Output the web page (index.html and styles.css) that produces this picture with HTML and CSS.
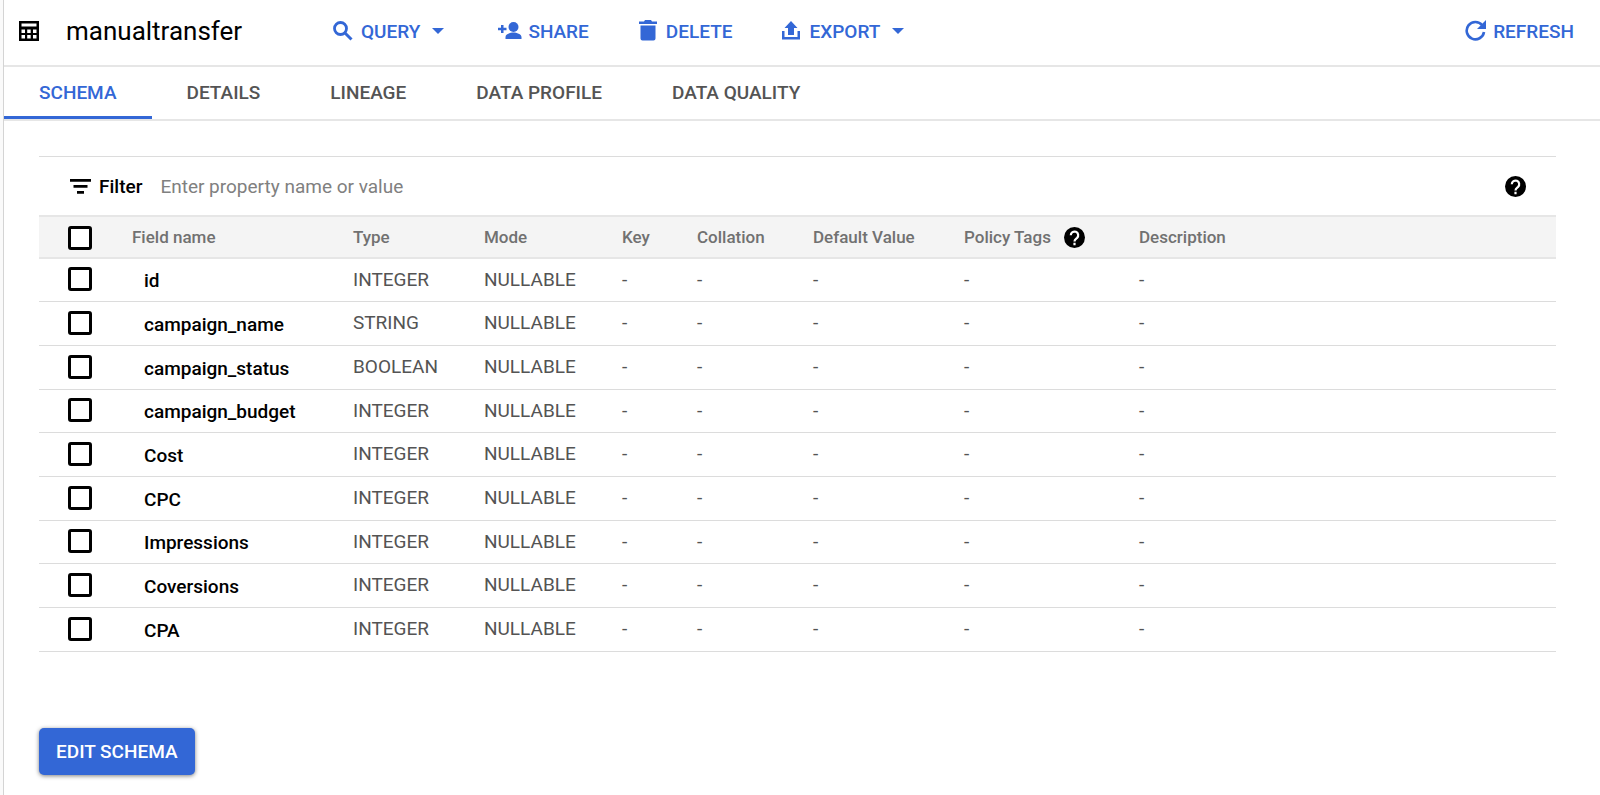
FILE: index.html
```html
<!DOCTYPE html>
<html lang="en">
<head>
  <meta charset="UTF-8">
  <meta name="viewport" content="width=device-width, initial-scale=1.0">
  <title>manualtransfer</title>
  <link rel="stylesheet" href="styles.css">
</head>
<body>

  <main class="panel">
    <!-- Title and actions -->
    <header class="toolbar">
      <svg class="table-icon" width="20" height="20" viewBox="0 0 20 20"><path fill-rule="evenodd" d="M0 0h20v20H0zM2.500 2.500v3h15v-3zM2.500 8.500v3.500h3.500v-3.500zM8.200 8.500v3.500h3.500v-3.500zM14 8.500v3.500h3.500v-3.500zM2.500 14v3.500h3.500v-3.500zM8.200 14v3.500h3.500v-3.500zM14 14v3.500h3.500v-3.500z"/></svg>
      <h1 class="title">manualtransfer</h1>

      <div class="actions">
        <button class="action" type="button">
          <span class="slot"><svg width="20" height="20" viewBox="0 0 20 20"><circle cx="7.500" cy="7.500" r="6" fill="none" stroke="currentColor" stroke-width="2.800"/><path d="M11.500 11.500l7 7" stroke="currentColor" stroke-width="3"/></svg></span>
          QUERY
          <span class="slot"><svg width="12" height="6" viewBox="0 0 12 6"><path d="M0 0h12L6 6z"/></svg></span>
        </button>
        <button class="action" type="button">
          <span class="slot"><svg width="24" height="18" viewBox="0 0 24 18"><circle cx="15.500" cy="5" r="5"/><path d="M7.500 17v-2c0-3 5-4.500 8-4.500s8 1.500 8 4.500v2zM3 3h2.500v2.800H8.500v2.400H5.500V11H3V8.200H0V5.800h3z"/></svg></span>
          SHARE
        </button>
        <button class="action" type="button">
          <span class="slot"><svg width="18" height="21" viewBox="0 0 18 21"><path d="M0 1.500h5L6 0h6l1 1.500h5V4H0zM1.500 5.500h15v13a2 2 0 0 1-2 2h-11a2 2 0 0 1-2-2z"/></svg></span>
          DELETE
        </button>
        <button class="action" type="button">
          <span class="slot"><svg width="18" height="19" viewBox="0 0 18 19"><path d="M9 0l6.500 7H12v7H6V7H2.500zM0 10h2.500v6h13v-6H18v8.500H0z"/></svg></span>
          EXPORT
          <span class="slot"><svg width="12" height="6" viewBox="0 0 12 6"><path d="M0 0h12L6 6z"/></svg></span>
        </button>
      </div>

      <button class="action refresh" type="button">
        <span class="slot"><svg width="21" height="21" viewBox="0 0 21 21"><path d="M17.200 5.200A8.700 8.700 0 1 0 19 12" fill="none" stroke="currentColor" stroke-width="2.600"/><path d="M21 0v9h-9z"/></svg></span>
        REFRESH
      </button>
    </header>

    <nav class="tabs">
      <a class="tab active" href="#schema">SCHEMA</a>
      <a class="tab" href="#details">DETAILS</a>
      <a class="tab" href="#lineage">LINEAGE</a>
      <a class="tab" href="#profile">DATA PROFILE</a>
      <a class="tab" href="#quality">DATA QUALITY</a>
    </nav>

    <section class="content" id="schema">
      <!-- Filter bar -->
      <div class="filter">
        <svg width="21" height="15" viewBox="0 0 21 15"><path d="M0 0h21v2.800H0zM3.500 6h14v2.800h-14zM7 12h7v2.800H7z"/></svg>
        <label class="filter-label" for="filter">Filter</label>
        <input class="filter-input" id="filter" type="text" placeholder="Enter property name or value">
        <button class="help" type="button" aria-label="Help"><svg width="21" height="21" viewBox="0 0 21 21"><circle cx="10.500" cy="10.500" r="10.500"/><path d="M6.800 8.300a3.700 3.700 0 1 1 6.300 2.600c-1.500 1.300-2.600 1.700-2.600 3.600M10.500 15.700v2.500" fill="none" stroke="#fff" stroke-width="2.200"/></svg></button>
      </div>

      <!-- Schema fields -->
      <table class="fields">
        <colgroup>
          <col class="col-check">
          <col class="col-name">
          <col class="col-type">
          <col class="col-mode">
          <col class="col-key">
          <col class="col-collation">
          <col class="col-default">
          <col class="col-policy">
          <col>
        </colgroup>
        <thead>
          <tr>
            <th><input class="check" type="checkbox" aria-label="Select all"></th>
            <th>Field name</th>
            <th>Type</th>
            <th>Mode</th>
            <th>Key</th>
            <th>Collation</th>
            <th>Default Value</th>
            <th>
              <div class="with-help">
                Policy Tags
                <button class="help" type="button" aria-label="Help"><svg width="21" height="21" viewBox="0 0 21 21"><circle cx="10.500" cy="10.500" r="10.500"/><path d="M6.800 8.300a3.700 3.700 0 1 1 6.300 2.600c-1.500 1.300-2.600 1.700-2.600 3.600M10.500 15.700v2.500" fill="none" stroke="#fff" stroke-width="2.200"/></svg></button>
              </div>
            </th>
            <th>Description</th>
          </tr>
        </thead>
        <tbody>
          <tr>
            <td><input class="check" type="checkbox" id="f1"></td>
            <td class="name"><label for="f1">id</label></td>
            <td>INTEGER</td><td>NULLABLE</td><td>-</td><td>-</td><td>-</td><td>-</td><td>-</td>
          </tr>
          <tr>
            <td><input class="check" type="checkbox" id="f2"></td>
            <td class="name"><label for="f2">campaign_name</label></td>
            <td>STRING</td><td>NULLABLE</td><td>-</td><td>-</td><td>-</td><td>-</td><td>-</td>
          </tr>
          <tr>
            <td><input class="check" type="checkbox" id="f3"></td>
            <td class="name"><label for="f3">campaign_status</label></td>
            <td>BOOLEAN</td><td>NULLABLE</td><td>-</td><td>-</td><td>-</td><td>-</td><td>-</td>
          </tr>
          <tr>
            <td><input class="check" type="checkbox" id="f4"></td>
            <td class="name"><label for="f4">campaign_budget</label></td>
            <td>INTEGER</td><td>NULLABLE</td><td>-</td><td>-</td><td>-</td><td>-</td><td>-</td>
          </tr>
          <tr>
            <td><input class="check" type="checkbox" id="f5"></td>
            <td class="name"><label for="f5">Cost</label></td>
            <td>INTEGER</td><td>NULLABLE</td><td>-</td><td>-</td><td>-</td><td>-</td><td>-</td>
          </tr>
          <tr>
            <td><input class="check" type="checkbox" id="f6"></td>
            <td class="name"><label for="f6">CPC</label></td>
            <td>INTEGER</td><td>NULLABLE</td><td>-</td><td>-</td><td>-</td><td>-</td><td>-</td>
          </tr>
          <tr>
            <td><input class="check" type="checkbox" id="f7"></td>
            <td class="name"><label for="f7">Impressions</label></td>
            <td>INTEGER</td><td>NULLABLE</td><td>-</td><td>-</td><td>-</td><td>-</td><td>-</td>
          </tr>
          <tr>
            <td><input class="check" type="checkbox" id="f8"></td>
            <td class="name"><label for="f8">Coversions</label></td>
            <td>INTEGER</td><td>NULLABLE</td><td>-</td><td>-</td><td>-</td><td>-</td><td>-</td>
          </tr>
          <tr>
            <td><input class="check" type="checkbox" id="f9"></td>
            <td class="name"><label for="f9">CPA</label></td>
            <td>INTEGER</td><td>NULLABLE</td><td>-</td><td>-</td><td>-</td><td>-</td><td>-</td>
          </tr>
        </tbody>
      </table>

      <button class="edit" type="button">EDIT SCHEMA</button>
    </section>
  </main>

</body>
</html>
```
FILE: styles.css
```css
* {
  box-sizing: border-box;
}

body {
  margin: 0;
  padding-left: 3px;
  background-color: #fafafa;
  font-family: Roboto, Arial, sans-serif;
  font-size: 19px;
  color: #000;
}

svg {
  display: block;
  flex: none;
  fill: currentColor;
}

button {
  font: inherit;
  border: none;
  cursor: pointer;
}

.panel {
  min-height: 100vh;
  background-color: #fff;
  border-left: 1px solid #d4d4d4;
}

/* Title and actions */
.toolbar {
  display: flex;
  align-items: center;
  height: 67px;
  padding: 0 26px 4px 15px;
  border-bottom: 2px solid #e6e6e6;
}

.title {
  width: 264px;
  margin: 0 0 0 27px;
  font-size: 26px;
  font-weight: 400;
  line-height: 32px;
}

.actions {
  display: flex;
  gap: 46px;
}

.action {
  display: flex;
  align-items: center;
  gap: 5px;
  padding: 2px 0 0;
  background: none;
  color: #3367d6;
  font-weight: 500;
}

.slot {
  display: flex;
  justify-content: center;
  width: 26px;
  padding-bottom: 2px;
}

.refresh {
  margin-left: auto;
}

/* Tabs */
.tabs {
  display: flex;
  border-bottom: 2px solid #e6e6e6;
}

.tab {
  height: 52px;
  padding: 0 35px;
  border-bottom: 3px solid transparent;
  color: #545454;
  font-weight: 500;
  line-height: 52px;
  text-decoration: none;
}

.tab.active {
  border-bottom-color: #3367d6;
  color: #3367d6;
}

.content {
  padding: 35px 44px 20px 35px;
}

/* Filter bar */
.filter {
  display: flex;
  align-items: center;
  height: 59px;
  padding: 0 30px 0 31px;
  border-top: 1px solid #dcdcdc;
}

.filter-label {
  margin: 0 18px 0 8px;
  font-weight: 500;
}

.filter-input {
  flex: 1;
  padding: 0;
  border: none;
  outline: none;
  font: inherit;
}

.filter-input::placeholder {
  color: #808080;
}

.help {
  padding: 0;
  background: none;
  color: #000;
}

/* Fields table */
.fields {
  width: 100%;
  table-layout: fixed;
  border-collapse: separate;
  border-spacing: 0;
}

.col-check { width: 93px; }
.col-name { width: 221px; }
.col-type { width: 131px; }
.col-mode { width: 138px; }
.col-key { width: 75px; }
.col-collation { width: 116px; }
.col-default { width: 151px; }
.col-policy { width: 175px; }

.fields th {
  height: 44px;
  padding: 0;
  background-color: #f4f4f4;
  border-top: 2px solid #e6e6e6;
  border-bottom: 2px solid #e6e6e6;
  color: #717171;
  font-size: 17px;
  font-weight: 500;
  text-align: left;
}

.fields th:first-child {
  padding-top: 2px;
}

.fields td {
  height: 44px;
  padding: 0 0 2px;
  border-bottom: 1px solid #dcdcdc;
  color: #545454;
}

/* every third row is a pixel shorter */
.fields tr:nth-child(3n + 1) td {
  height: 43px;
}

.fields .name {
  padding: 1px 0 0 12px;
  color: #000;
  font-weight: 500;
}

.with-help {
  display: flex;
  align-items: center;
  gap: 13px;
}

.check {
  appearance: none;
  display: block;
  width: 24px;
  height: 24px;
  margin: 0 0 0 29px;
  background-color: #fff;
  border: 3px solid #000;
  border-radius: 3px;
}

.check:checked {
  background-color: #3367d6;
}

.edit {
  height: 47px;
  margin-top: 76px;
  padding: 0 17px;
  background-color: #3367d6;
  border-radius: 5px;
  box-shadow: 0 1px 4px rgba(0, 0, 0, 0.5);
  color: #fff;
  font-weight: 500;
}
```
